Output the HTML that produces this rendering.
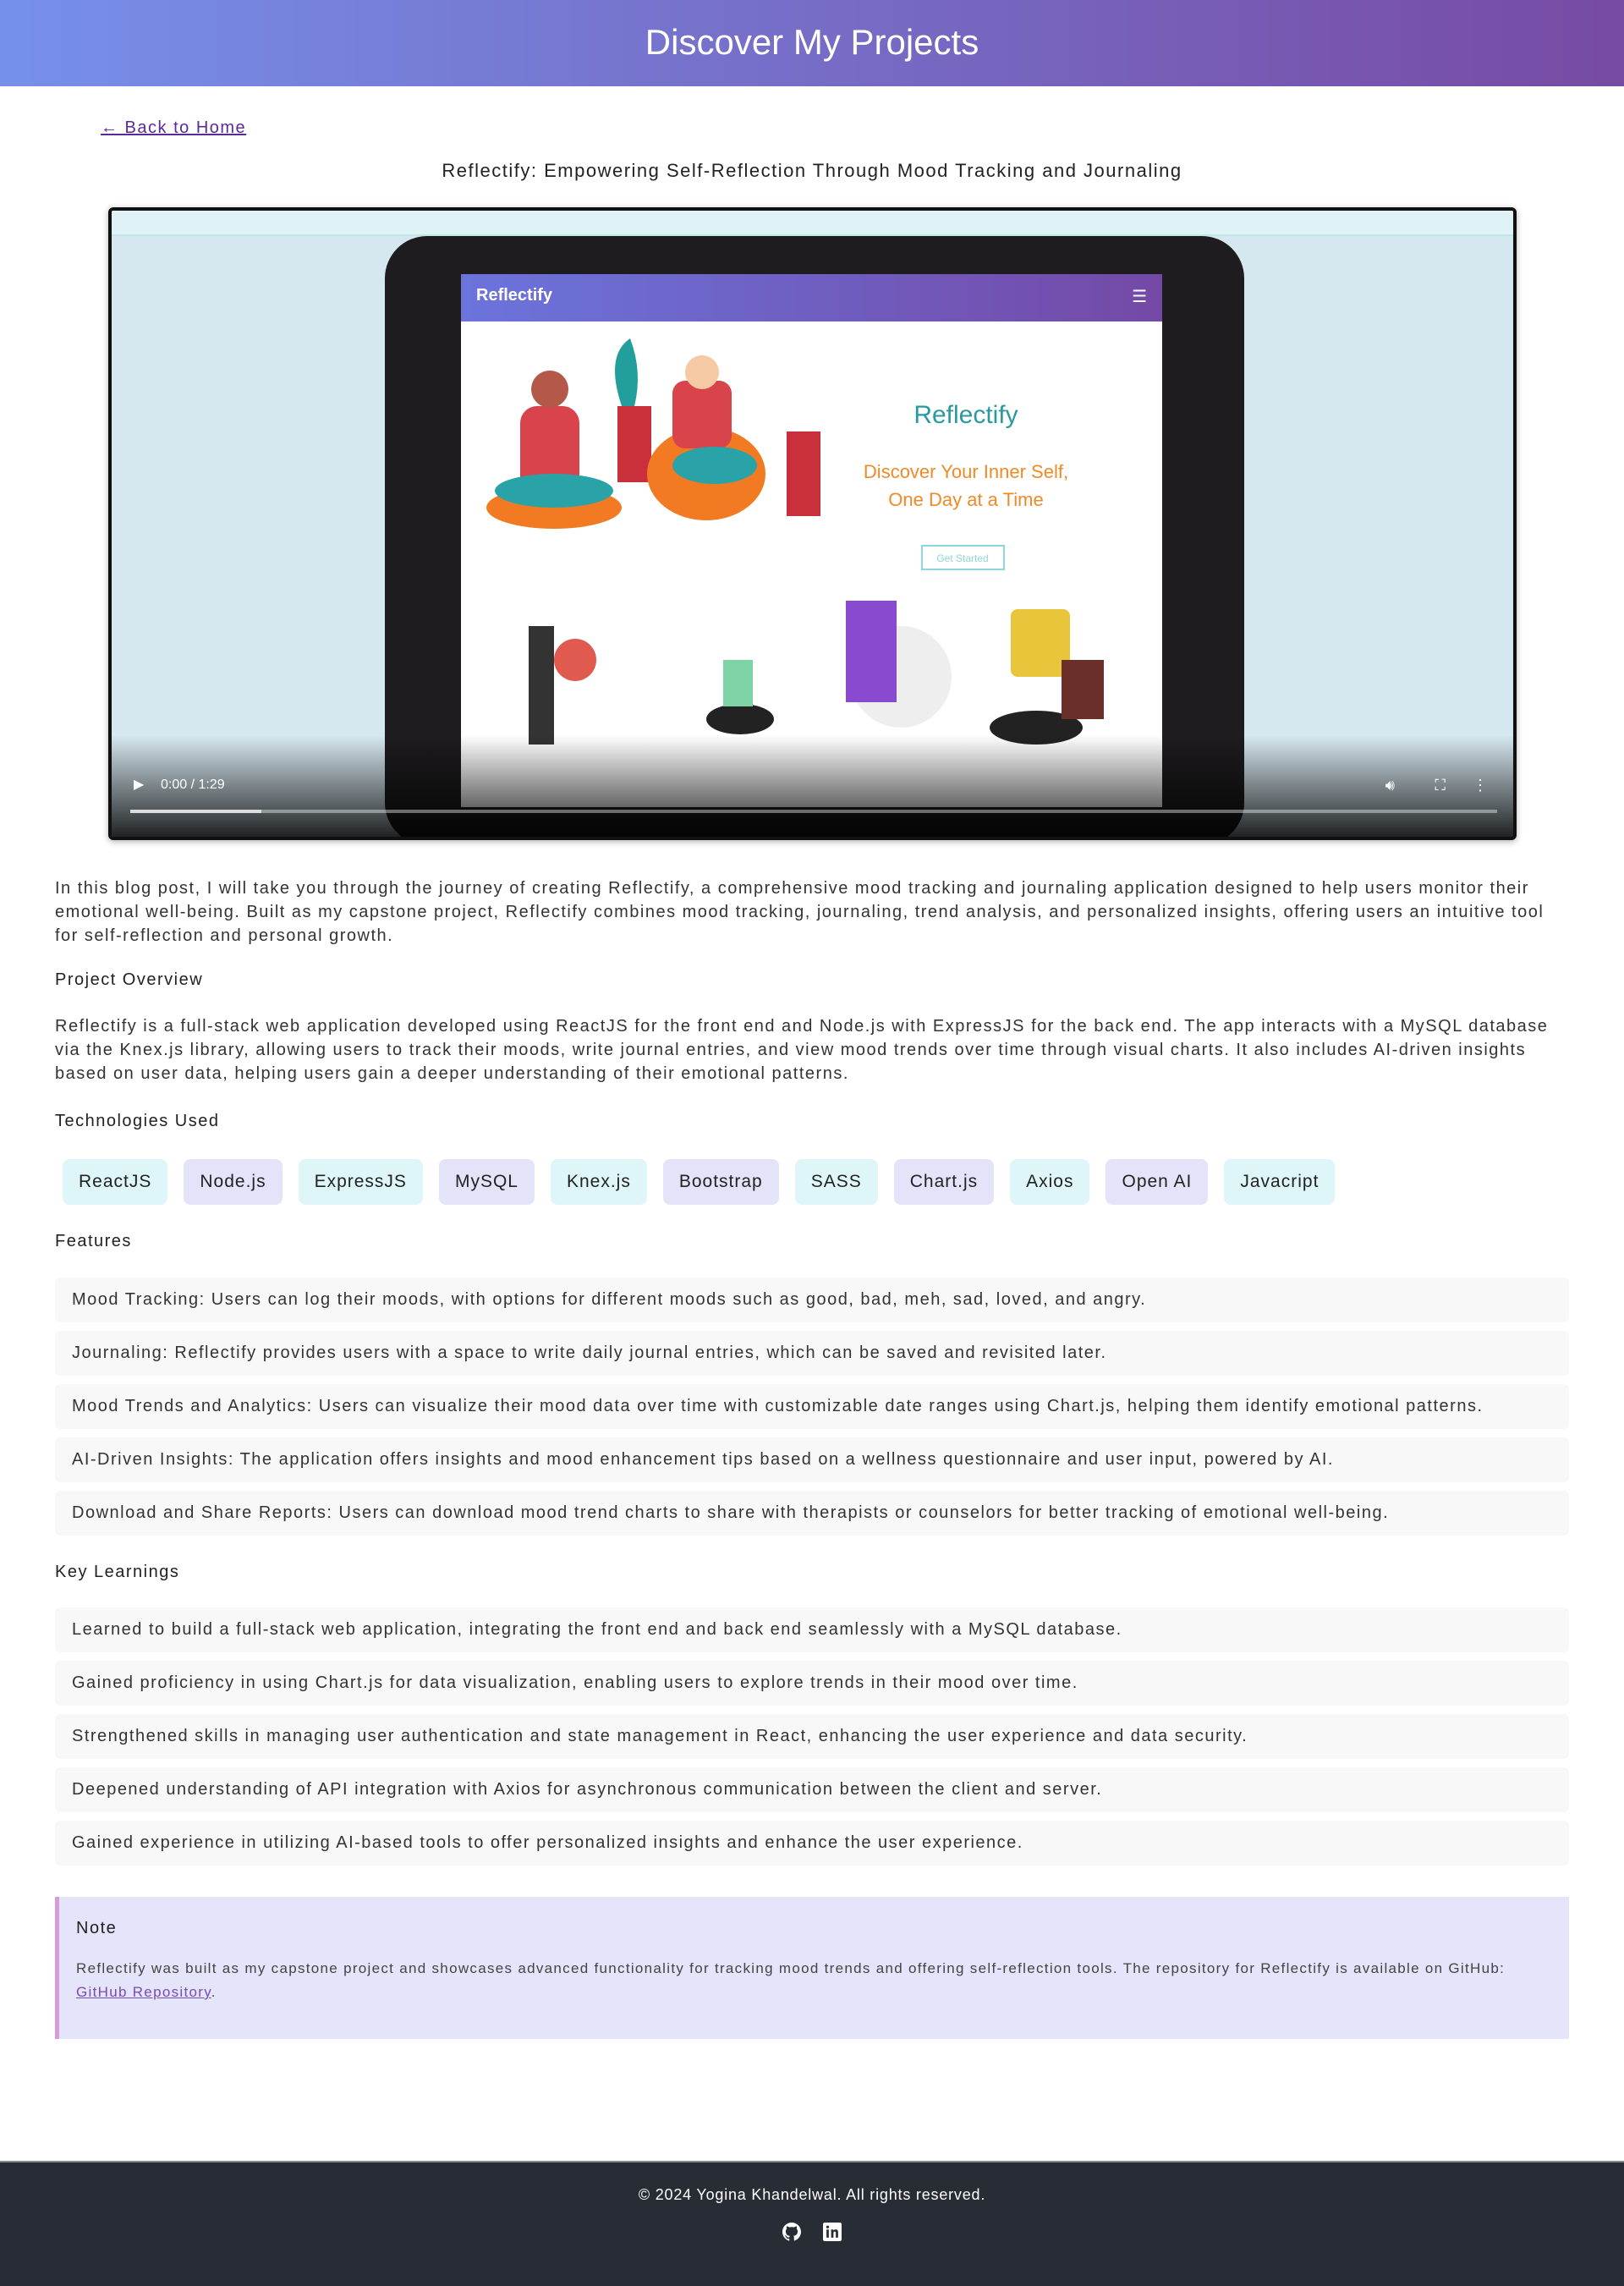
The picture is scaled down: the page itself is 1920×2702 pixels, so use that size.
<!DOCTYPE html>
<html><head><meta charset="utf-8"><style>
*{box-sizing:border-box;margin:0;padding:0}
body{width:1920px;height:2702px;background:#fff;font-family:"Liberation Sans",sans-serif;color:#333;position:relative;overflow:hidden;letter-spacing:1.5px}
header{height:102px;background:linear-gradient(90deg,#7690ea,#774aa3);color:#fff;text-align:center;font-size:42px;line-height:100px;letter-spacing:0}
.back{position:absolute;left:119px;top:140px;font-size:20px;color:#5a2a9a;text-decoration:underline}
.sub{position:absolute;top:189px;width:100%;text-align:center;font-size:22px;color:#222}
.video{position:absolute;left:128px;top:245px;width:1665px;height:748px;border:4px solid #111;border-radius:6px;background:#d6e8ef;overflow:hidden;box-shadow:0 2px 8px rgba(0,0,0,.3);letter-spacing:0}
.strip{position:absolute;left:0;top:0;width:100%;height:30px;background:#dff3f6;border-bottom:2px solid #bfe6ea}
.tablet{position:absolute;left:323px;top:30px;width:1016px;height:720px;background:#1e1c1e;border-radius:50px}
.screen{position:absolute;left:413px;top:75px;width:829px;height:630px;background:#fff}
.bar{height:56px;background:linear-gradient(90deg,#6b74dc,#7449a6);color:#fff;font-weight:bold;font-size:20px;padding:14px 18px}
.ctrl{position:absolute;left:0;bottom:0;width:100%;height:120px;background:linear-gradient(rgba(0,0,0,0),rgba(0,0,0,.85))}
.prog{position:absolute;left:22px;bottom:28px;width:1616px;height:4px;background:rgba(255,255,255,.4)}
.prog i{display:block;width:155px;height:4px;background:#ddd}
.time{position:absolute;left:58px;bottom:52px;color:#fff;font-size:16px}
.txt{position:absolute;left:65px;width:1790px;font-size:20px;line-height:28px;color:#333}
h4{position:absolute;left:65px;font-size:20px;font-weight:normal;color:#222}
.tags{position:absolute;left:74px;top:1370px;display:flex;gap:19px}
.tags span{height:54px;line-height:54px;padding:0 19px;border-radius:8px;font-size:21px;color:#222;background:#dff6f8;letter-spacing:1px}
.tags span:nth-child(2n){background:#e5e3fa}
.list{position:absolute;left:65px;width:1790px}
.list div{height:53px;line-height:53px;background:#f8f8f8;border-radius:6px;margin-bottom:10px;padding-left:20px;font-size:20px;color:#333}
.note{position:absolute;left:65px;top:2242px;width:1790px;height:168px;background:#e4e4fa;border-left:5px solid #d99ad8;padding:26px 20px}
.note b{font-weight:normal;font-size:20px;color:#222}
.note p{margin-top:22px;font-size:17px;line-height:28px;color:#444;letter-spacing:1.3px}
.note a{color:#7a4bb0}
footer{position:absolute;left:0;top:2554px;width:100%;height:148px;background:#282c34;border-top:2px solid #888;color:#fff;text-align:center}
</style></head><body>
<header>Discover My Projects</header>
<a class="back">&larr; Back to Home</a>
<div class="sub">Reflectify: Empowering Self-Reflection Through Mood Tracking and Journaling</div>
<div class="video">
<div class="strip"></div>
<div class="tablet"></div>
<div class="screen"><div class="bar">Reflectify<span style="float:right;font-weight:normal">☰</span></div>
<svg width="829" height="574" viewBox="0 0 829 574">
<ellipse cx="110" cy="220" rx="80" ry="25" fill="#f27a22"/><rect x="70" y="100" width="70" height="110" fill="#d9444c" rx="20"/><circle cx="105" cy="80" r="22" fill="#b4584a"/><ellipse cx="110" cy="200" rx="70" ry="20" fill="#2aa3a8"/>
<rect x="185" y="100" width="40" height="90" fill="#c9303c"/><path d="M190 100 Q170 40 200 20 Q215 60 205 100Z" fill="#229e9d"/>
<ellipse cx="290" cy="180" rx="70" ry="55" fill="#f27a22"/><rect x="250" y="70" width="70" height="80" fill="#d9444c" rx="15"/><circle cx="285" cy="60" r="20" fill="#f5c9a3"/><ellipse cx="300" cy="170" rx="50" ry="22" fill="#2aa3a8"/>
<rect x="385" y="130" width="40" height="100" fill="#c9303c"/>
<text x="597" y="120" font-size="30" fill="#2a9aa0" text-anchor="middle" font-family="Liberation Sans">Reflectify</text>
<text x="597" y="185" font-size="22" fill="#f08a28" text-anchor="middle" font-family="Liberation Sans">Discover Your Inner Self,</text>
<text x="597" y="218" font-size="22" fill="#f08a28" text-anchor="middle" font-family="Liberation Sans">One Day at a Time</text>
<rect x="545" y="265" width="97" height="28" fill="none" stroke="#8fd6da" stroke-width="2"/><text x="593" y="284" font-size="12" fill="#8fd6da" text-anchor="middle">Get Started</text>
<rect x="80" y="360" width="30" height="140" fill="#333"/><circle cx="135" cy="400" r="25" fill="#e05a50"/>
<ellipse cx="330" cy="470" rx="40" ry="18" fill="#222"/><rect x="310" y="400" width="35" height="55" fill="#7dd3a6"/>
<circle cx="520" cy="420" r="60" fill="#eee"/><rect x="455" y="330" width="60" height="120" fill="#8a4ad0"/>
<rect x="650" y="340" width="70" height="80" fill="#e8c53a" rx="8"/><ellipse cx="680" cy="480" rx="55" ry="20" fill="#222"/><rect x="710" y="400" width="50" height="70" fill="#6b2f2a"/>
</svg></div>
<div class="ctrl"><span style="position:absolute;left:26px;bottom:52px;color:#fff;font-size:16px">▶</span><span class="time">0:00 / 1:29</span>
<span style="position:absolute;right:140px;bottom:50px;color:#fff;font-size:18px">🔊︎</span><span style="position:absolute;right:80px;bottom:50px;color:#fff;font-size:18px">⛶</span><span style="position:absolute;right:30px;bottom:50px;color:#fff;font-size:18px">⋮</span>
<div class="prog"><i></i></div></div>
</div>
<div class="txt" style="top:1036px">In this blog post, I will take you through the journey of creating Reflectify, a comprehensive mood tracking and journaling application designed to help users monitor their emotional well-being. Built as my capstone project, Reflectify combines mood tracking, journaling, trend analysis, and personalized insights, offering users an intuitive tool for self-reflection and personal growth.</div>
<h4 style="top:1147px">Project Overview</h4>
<div class="txt" style="top:1199px">Reflectify is a full-stack web application developed using ReactJS for the front end and Node.js with ExpressJS for the back end. The app interacts with a MySQL database via the Knex.js library, allowing users to track their moods, write journal entries, and view mood trends over time through visual charts. It also includes AI-driven insights based on user data, helping users gain a deeper understanding of their emotional patterns.</div>
<h4 style="top:1314px">Technologies Used</h4>
<div class="tags"><span>ReactJS</span><span>Node.js</span><span>ExpressJS</span><span>MySQL</span><span>Knex.js</span><span>Bootstrap</span><span>SASS</span><span>Chart.js</span><span>Axios</span><span>Open AI</span><span>Javacript</span></div>
<h4 style="top:1456px">Features</h4>
<div class="list" style="top:1510px">
<div>Mood Tracking: Users can log their moods, with options for different moods such as good, bad, meh, sad, loved, and angry.</div>
<div>Journaling: Reflectify provides users with a space to write daily journal entries, which can be saved and revisited later.</div>
<div>Mood Trends and Analytics: Users can visualize their mood data over time with customizable date ranges using Chart.js, helping them identify emotional patterns.</div>
<div>AI-Driven Insights: The application offers insights and mood enhancement tips based on a wellness questionnaire and user input, powered by AI.</div>
<div>Download and Share Reports: Users can download mood trend charts to share with therapists or counselors for better tracking of emotional well-being.</div>
</div>
<h4 style="top:1847px">Key Learnings</h4>
<div class="list" style="top:1900px">
<div>Learned to build a full-stack web application, integrating the front end and back end seamlessly with a MySQL database.</div>
<div>Gained proficiency in using Chart.js for data visualization, enabling users to explore trends in their mood over time.</div>
<div>Strengthened skills in managing user authentication and state management in React, enhancing the user experience and data security.</div>
<div>Deepened understanding of API integration with Axios for asynchronous communication between the client and server.</div>
<div>Gained experience in utilizing AI-based tools to offer personalized insights and enhance the user experience.</div>
</div>
<div class="note"><b>Note</b><p>Reflectify was built as my capstone project and showcases advanced functionality for tracking mood trends and offering self-reflection tools. The repository for Reflectify is available on GitHub: <a style="text-decoration:underline">GitHub Repository</a>.</p></div>
<footer><div style="margin-top:28px;font-size:18px;letter-spacing:0.8px">© 2024 Yogina Khandelwal. All rights reserved.</div>
<div style="margin-top:22px;display:flex;justify-content:center;gap:26px">
<svg width="22" height="22" viewBox="0 0 16 16"><path fill="#fff" d="M8 0C3.6 0 0 3.6 0 8c0 3.5 2.3 6.5 5.5 7.6.4.1.5-.2.5-.4v-1.4c-2.2.5-2.7-1-2.7-1-.4-.9-.9-1.2-.9-1.2-.7-.5.1-.5.1-.5.8.1 1.2.8 1.2.8.7 1.2 1.9.9 2.3.7.1-.5.3-.9.5-1.1-1.8-.2-3.6-.9-3.6-4 0-.9.3-1.6.8-2.1-.1-.2-.4-1 .1-2.1 0 0 .7-.2 2.2.8.6-.2 1.3-.3 2-.3s1.4.1 2 .3c1.5-1 2.2-.8 2.2-.8.4 1.1.2 1.9.1 2.1.5.6.8 1.3.8 2.1 0 3.1-1.9 3.7-3.6 3.9.3.3.5.8.5 1.5v2.2c0 .2.1.5.6.4C13.7 14.5 16 11.5 16 8c0-4.4-3.6-8-8-8z"/></svg>
<svg width="22" height="22" viewBox="0 0 16 16"><rect width="16" height="16" rx="1.5" fill="#fff"/><rect x="3" y="6" width="2" height="7" fill="#282c34"/><circle cx="4" cy="3.8" r="1.2" fill="#282c34"/><path d="M7 6h2v1c.4-.7 1.2-1.1 2-1.1 1.6 0 2 1 2 2.5V13h-2V9c0-.8-.2-1.3-.9-1.3S9 8.3 9 9v4H7z" fill="#282c34"/></svg>
</div></footer>
</body></html>
